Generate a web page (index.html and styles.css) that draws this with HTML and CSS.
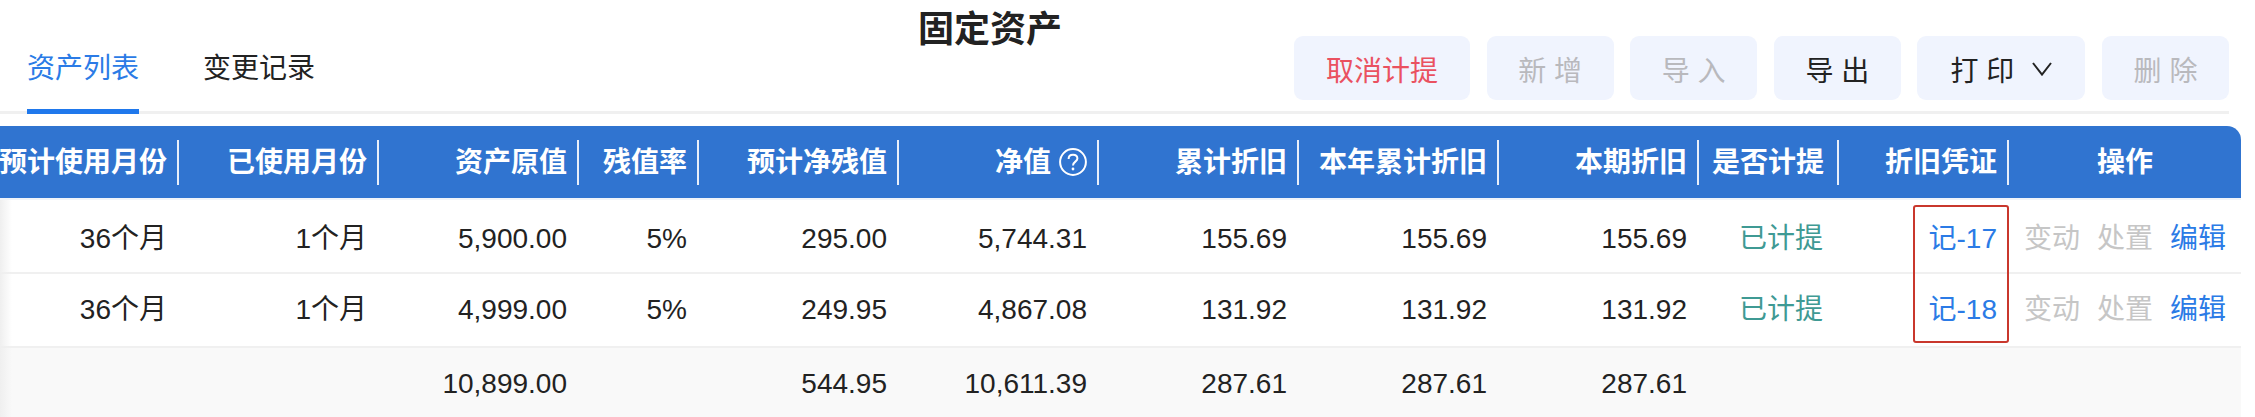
FILE: index.html
```html
<!DOCTYPE html>
<html lang="en">
<head>
    <meta charset="UTF-8">
    <meta name="viewport" content="width=device-width, initial-scale=1.0">
    <title>固定资产</title>
    <link rel="stylesheet" href="styles.css">
</head>
<body>

    <div class="head">
        <div class="tabs">
            <a class="tab active" href="#">资产列表</a>
            <a class="tab" href="#">变更记录</a>
        </div>
        <h1 class="page-title">固定资产</h1>
        <div class="toolbar">
            <button class="btn btn-red">取消计提</button>
            <button class="btn btn-off">新 增</button>
            <button class="btn btn-off">导 入</button>
            <button class="btn">导 出</button>
            <button class="btn btn-print">打 印
                <svg class="chevron" viewBox="0 0 20 14" width="20" height="14"><path d="M1 1 L10 12.6 L19 1" fill="none" stroke="#222" stroke-width="2"/></svg>
            </button>
            <button class="btn btn-off">删 除</button>
        </div>
    </div>

    <div class="table-wrap">
        <table class="assets">
            <colgroup>
                <col class="w200"><col class="w200"><col class="w200"><col class="w120"><col class="w200"><col class="w200">
                <col class="w200"><col class="w200"><col class="w200"><col class="w140"><col class="w170"><col class="w232">
            </colgroup>
            <thead>
                <tr>
                    <th><span class="th-in">预计使用月份</span></th>
                    <th><span class="th-in">已使用月份</span></th>
                    <th><span class="th-in">资产原值</span></th>
                    <th><span class="th-in">残值率</span></th>
                    <th><span class="th-in">预计净残值</span></th>
                    <th><span class="th-in">净值
                        <svg class="help" viewBox="0 0 28 28" width="28" height="28"><circle cx="14" cy="14" r="12.9" fill="none" stroke="#fff" stroke-width="2"/><path d="M9.6 11 C9.6 8.2 11.6 6.8 14 6.8 C16.6 6.8 18.4 8.4 18.4 10.6 C18.4 13.6 14 13.8 14 17.4" fill="none" stroke="#fff" stroke-width="2"/><circle cx="14" cy="21" r="1.4" fill="#fff"/></svg>
                    </span></th>
                    <th><span class="th-in">累计折旧</span></th>
                    <th><span class="th-in">本年累计折旧</span></th>
                    <th><span class="th-in">本期折旧</span></th>
                    <th class="center"><span class="th-in">是否计提</span></th>
                    <th><span class="th-in">折旧凭证</span></th>
                    <th class="center last"><span class="th-in">操作</span></th>
                </tr>
            </thead>
            <tbody>
                <tr class="row-first">
                    <td>36个月</td><td>1个月</td><td>5,900.00</td><td>5%</td><td>295.00</td><td>5,744.31</td>
                    <td>155.69</td><td>155.69</td><td>155.69</td>
                    <td class="status">已计提</td>
                    <td><a class="link" href="#">记-17</a></td>
                    <td class="center"><div class="ops"><span class="off">变动</span><span class="off">处置</span><a class="link" href="#">编辑</a></div></td>
                </tr>
                <tr>
                    <td>36个月</td><td>1个月</td><td>4,999.00</td><td>5%</td><td>249.95</td><td>4,867.08</td>
                    <td>131.92</td><td>131.92</td><td>131.92</td>
                    <td class="status">已计提</td>
                    <td><a class="link" href="#">记-18</a></td>
                    <td class="center"><div class="ops"><span class="off">变动</span><span class="off">处置</span><a class="link" href="#">编辑</a></div></td>
                </tr>
                <tr class="total">
                    <td></td><td></td><td>10,899.00</td><td></td><td>544.95</td><td>10,611.39</td>
                    <td>287.61</td><td>287.61</td><td>287.61</td><td></td><td></td><td></td>
                </tr>
            </tbody>
        </table>
        <div class="mark"></div>
        <div class="fade"></div>
    </div>

</body>
</html>
```

FILE: styles.css
```css
html, body {
    margin: 0;
    height: 417px;
    overflow: hidden;
}
body {
    background: #fff;
    color: #222;
    font-family: "Liberation Sans", "Noto Sans CJK SC", sans-serif;
    font-size: 28px;
}
a {
    text-decoration: none;
}

.head {
    display: grid;
    grid-template-columns: 1fr;
    width: 2229px;
    height: 114px;
    border-bottom: 3px solid #f0f0f0;
    box-sizing: border-box;
}
.tabs, .page-title, .toolbar {
    grid-row: 1;
    grid-column: 1;
}
.tabs {
    display: flex;
    gap: 64px;
    padding-left: 27px;
}
.tab {
    color: #222;
    height: 114px;
    box-sizing: border-box;
    padding-top: 48px;
    line-height: 42px;
}
.tab.active {
    color: #2b7be6;
    border-bottom: 5px solid #1f78ec;
}
.page-title {
    margin: 0;
    padding: 5px 0 0 918px;
    font-size: 36px;
    line-height: 50px;
    font-weight: 700;
    color: #222;
}
.toolbar {
    display: flex;
    justify-content: flex-end;
    align-items: flex-start;
    gap: 16.6px;
    padding-top: 36px;
}
.btn {
    height: 64px;
    width: 127px;
    padding: 2px 0 0;
    border: 0;
    border-radius: 9px;
    background: #f0f4fe;
    color: #222;
    font: inherit;
    white-space: nowrap;
}
.btn-red {
    color: #ea5160;
    width: 176px;
}
.btn-off {
    color: #b9b9bd;
}
.btn-print {
    display: flex;
    align-items: center;
    justify-content: center;
    gap: 18px;
    width: 168px;
}

.table-wrap {
    position: relative;
    margin-top: 12px;
    height: 291px;
    overflow: hidden;
}
.assets {
    table-layout: fixed;
    border-collapse: separate;
    border-spacing: 0;
    width: 2262px;
    margin-left: -21px;
}
.w120 { width: 120px; }
.w140 { width: 140px; }
.w170 { width: 170px; }
.w200 { width: 200px; }
.w232 { width: 232px; }

.assets th {
    height: 74px;
    padding: 0;
    box-sizing: border-box;
    background: #3074d0;
    color: #fff;
    font-weight: 700;
    text-align: right;
    border-bottom: 2px solid #f0f4fa;
}
.assets th.last {
    border-top-right-radius: 14px;
}
.th-in {
    display: flex;
    align-items: center;
    justify-content: flex-end;
    gap: 8px;
    height: 45px;
    padding-right: 10px;
    border-right: 2px solid #e8effa;
    line-height: 45px;
}
.center .th-in {
    justify-content: center;
    padding: 0;
}
.last .th-in {
    border-right: 0;
}
.help {
    flex: none;
}

.assets td {
    height: 74px;
    box-sizing: border-box;
    padding: 0 12px 0 0;
    line-height: 40px;
    text-align: right;
    border-bottom: 2px solid #f0f0f0;
    white-space: nowrap;
}
.assets .row-first td {
    padding-top: 5px;
}
.assets td.center {
    padding-right: 0;
    text-align: center;
}
.assets td.status {
    color: #3f9a94;
    padding-right: 16px;
}
.assets .total td {
    background: #f9f9f9;
    border-bottom: 0;
    padding-bottom: 2px;
}
.link {
    color: #2b7be6;
}
.off {
    color: #c6c6c6;
}
.ops {
    display: flex;
    justify-content: center;
    gap: 17px;
}

/* red hand-drawn box over the voucher column */
.mark {
    position: absolute;
    left: 1913px;
    top: 79px;
    width: 96px;
    height: 138px;
    box-sizing: border-box;
    border: 2px solid #c9372c;
    border-radius: 3px;
}
/* shadow of the scrolled-away fixed column */
.fade {
    position: absolute;
    left: 0;
    top: 74px;
    bottom: 0;
    width: 12px;
    background: linear-gradient(to right, #efefef, rgba(239, 239, 239, 0));
}
```
